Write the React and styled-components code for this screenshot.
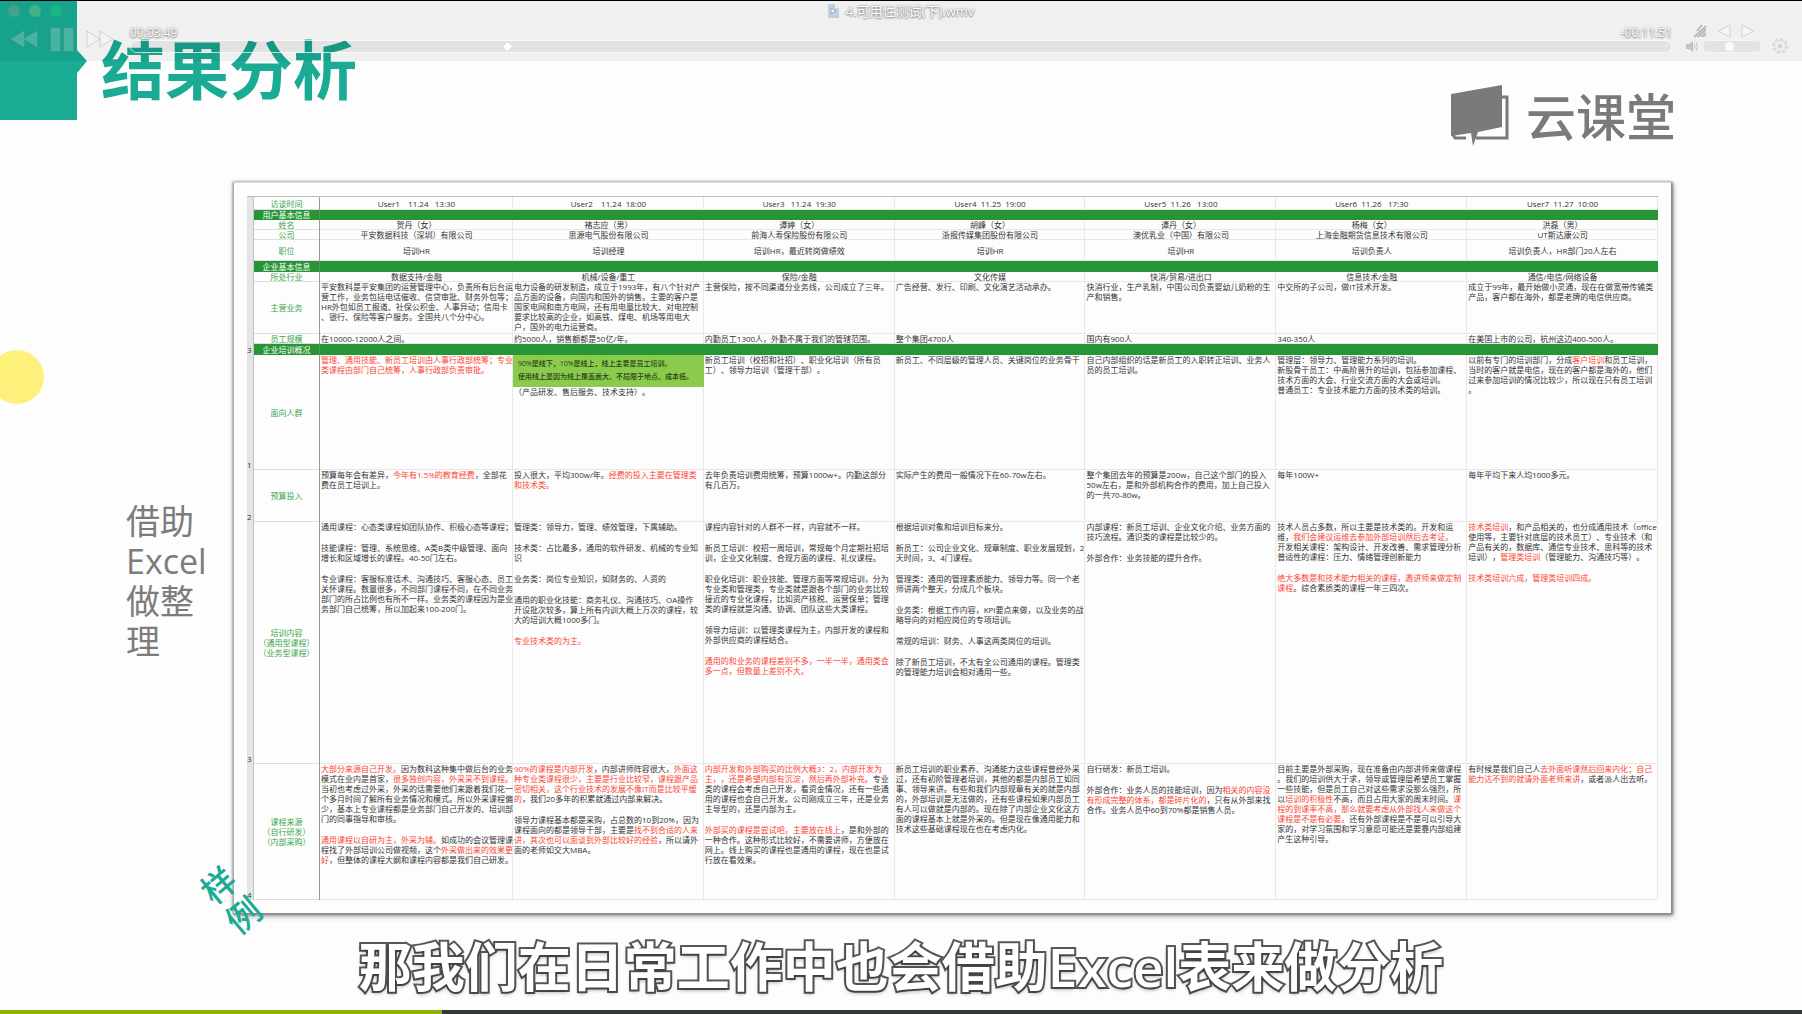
import React from "react";
import styled, { createGlobalStyle } from "styled-components";

const GlobalStyle = createGlobalStyle`
  * { box-sizing: border-box; }
  body {
    margin: 0;
    background: #fdfdfd;
    font-family: "Open Sans", "Noto Sans CJK SC", sans-serif;
    text-spacing-trim: space-all;
  }
  button {
    border: 0;
    padding: 0;
    background: none;
    display: flex;
    cursor: pointer;
  }
`;

const teal = "#19ab93";
const green = "#279535";

const Stage = styled.main`
  position: relative;
  display: flex;
  flex-direction: column;
  min-height: 100vh;
  overflow: hidden;
  border-top: 1px solid #000;
`;

/* ---------- player controls ---------- */

const Controls = styled.div`
  position: absolute;
  inset: 0 0 auto 0;
  height: 60px;
  background: rgba(0, 0, 0, 0.05);
`;

const TitleBar = styled.div`
  display: grid;
  grid-template-columns: 1fr auto 1fr;
  align-items: center;
  height: 20px;
  padding: 0 8px;
`;

const Lights = styled.div`
  display: flex;
  gap: 9px;
`;

const Light = styled.button`
  width: 12px;
  height: 12px;
  border-radius: 50%;
  background: ${(p) => p.$color};
`;

const FileName = styled.h2`
  display: flex;
  align-items: center;
  gap: 7px;
  margin: 0;
  font-size: 13px;
  line-height: 20px;
  font-weight: 400;
  color: #fff;
  text-shadow: 0 0 2px #777, 0 1px 2px #888;
`;

const ControlRow = styled.div`
  display: flex;
  align-items: center;
  height: 36px;
  padding: 0 12px 0 10px;
`;

const Transport = styled.div`
  display: flex;
  align-items: center;
  gap: 12px;
  width: 120px;
`;

const Timeline = styled.div`
  flex: 1;
  display: grid;
  grid-template-columns: 1fr 1fr;
  row-gap: 1px;
`;

const Clock = styled.time`
  font-size: 12px;
  line-height: 13px;
  color: #fff;
  text-shadow: 0 0 2px #777, 0 1px 2px #888;
  text-align: ${(p) => p.$align};
`;

const Seek = styled.input`
  grid-column: 1 / -1;
  appearance: none;
  width: 100%;
  height: 13px;
  margin: 0;
  border: 1px solid rgba(255, 255, 255, 0.7);
  border-radius: 7px;
  background: rgba(0, 0, 0, 0.05);
  &::-webkit-slider-thumb {
    appearance: none;
    width: 7px;
    height: 7px;
    background: #fff;
    transform: rotate(45deg);
    box-shadow: 0 0 1px #aaa;
  }
`;

const SideTools = styled.div`
  display: grid;
  grid-template-columns: 78px auto;
  column-gap: 10px;
  row-gap: 1px;
  margin-left: 12px;
  margin-right: 2px;
`;

const ToolRow = styled.div`
  grid-column: 1 / -1;
  display: flex;
  align-items: center;
  gap: 10px;
  height: 13px;
  padding-left: 8px;
`;

const VolumeRow = styled.label`
  grid-column: 1;
  display: flex;
  align-items: center;
  gap: 3px;
`;

const Volume = styled.input`
  appearance: none;
  width: 60px;
  height: 13px;
  margin: 0;
  border-radius: 7px;
  border: 1px solid #f6f6f6;
  background: #e3e3e3;
  &::-webkit-slider-thumb {
    appearance: none;
    width: 9px;
    height: 9px;
    border-radius: 50%;
    background: #fbfbfb;
  }
`;

/* ---------- slide ---------- */

const SlideHead = styled.header`
  display: flex;
  height: 181px;
  padding-right: 126px;
`;

const Marker = styled.div`
  width: 88px;
  height: 119px;
  background: ${teal};
  clip-path: polygon(0 0, 77px 0, 77px 49px, 87px 60px, 77px 72px, 77px 100%, 0 100%);
`;

const Heading = styled.h1`
  flex: 1;
  margin: 27px 0 0 13px;
  font-family: "Noto Sans CJK SC", sans-serif;
  font-size: 64px;
  line-height: 76px;
  font-weight: 700;
  color: ${teal};
`;

const Brand = styled.div`
  display: flex;
  align-items: flex-start;
  gap: 17px;
  padding-top: 84px;
  font-family: "Noto Sans CJK SC", sans-serif;
  font-size: 50px;
  line-height: 58px;
  font-weight: 500;
  color: #7a7a7a;
`;

const SlideBody = styled.section`
  display: flex;
  padding-right: 131px;
`;

const Side = styled.aside`
  position: relative;
  flex: 0 0 233px;
  padding: 319px 0 0 126px;
`;

const SideText = styled.p`
  width: 80px;
  margin: 0;
  font-size: 34px;
  line-height: 40px;
  font-weight: 400;
  color: #7c7c7c;
`;

const Pointer = styled.i`
  position: absolute;
  left: -10px;
  top: 168px;
  width: 54px;
  height: 54px;
  border-radius: 50%;
  background: #fdf17c;
`;

const Stamp = styled.span`
  position: absolute;
  z-index: 1;
  left: 213px;
  top: 678px;
  width: 34px;
  font-family: "Noto Sans CJK SC", sans-serif;
  font-size: 34px;
  line-height: 39px;
  font-weight: 500;
  color: ${teal};
  transform: rotate(-40deg);
`;

const Sheet = styled.div`
  flex: 1;
  min-width: 0;
  padding: 13px;
  border-left: 1px solid #aaa;
  border-top: 1px solid #ddd;
  background: #fdfdfd;
  box-shadow: 1px 1px 2px 1px #888, 2px 3px 6px rgba(0, 0, 0, 0.35), 0 0 4px rgba(0, 0, 0, 0.2);
`;

const Table = styled.table`
  width: 100%;
  table-layout: fixed;
  border-spacing: 0;
  border-top: 1px solid #bbb;
  font-size: 8px;
  line-height: 10px;
  color: #333;
`;

const Row = styled.tr`
  height: ${(p) => p.$h}px;
`;

const Gutter = styled.td`
  padding: 0;
  background: #e4e4e4;
  box-shadow: inset -1px 0 #c4c4c4;
  vertical-align: bottom;
  color: #333;
`;

const Label = styled.th`
  padding: 0;
  font-weight: 400;
  white-space: pre;
  text-align: center;
  vertical-align: middle;
  color: ${(p) => (p.$band ? "#fff" : "#3aa64a")};
  background: ${(p) => (p.$band ? green : "none")};
  box-shadow: inset 0 -1px ${(p) => (p.$band ? green : "#dedede")};
  border-right: 1px solid ${(p) => (p.$band ? "#55975c" : "#999")};
`;

const BandFill = styled.td`
  padding: 0;
  background: ${green};
`;

const Cell = styled.td`
  padding: 0 0 0 ${(p) => (p.$center ? 0 : 1)}px;
  white-space: pre;
  text-align: ${(p) => (p.$center ? "center" : "left")};
  vertical-align: ${(p) => (p.$center ? "middle" : "top")};
  box-shadow: inset -1px -1px #e8e8e8;
`;

const Para = styled.p`
  margin: 0;
  & + & {
    margin-top: 11px;
  }
`;

const Red = styled.span`
  color: #fb4634;
`;

const Note = styled.div`
  height: 32px;
  margin-left: -1px;
  padding: 2px 5px;
  background: #8acb4b;
  color: #24401a;
  font-size: 7px;
  line-height: 13px;
  font-weight: 500;
`;

const Caption = styled.p`
  margin: 16px 0 0;
  font-size: 53px;
  line-height: 76px;
  font-weight: 600;
  text-align: center;
  color: #fff;
  -webkit-text-stroke: 4px #5a5a5a;
  paint-order: stroke fill;
  text-shadow: 0 2px 4px rgba(0, 0, 0, 0.4);
`;

const Progress = styled.div`
  position: relative;
  margin-top: auto;
  height: 4px;
  background: #343836;
`;

const Played = styled.div`
  height: 100%;
  background: #8fb008;
`;

/* Text between square brackets is set in red; an empty line starts a new paragraph. */
const ROWS = [
  { h: 13, label: "访谈时间", center: true, cells: ["User1    11.24   13:30", "User2    11.24  18:00", "User3   11.24  19:30", "User4  11.25  19:00", "User5  11.26   13:00", "User6  11.26   17:30", "User7  11.27  10:00"] },
  { h: 10, label: "用户基本信息", band: true },
  { h: 10, label: "姓名", center: true, cells: ["贺丹（女）", "褚志应（男）", "谭婷（女）", "胡峰（女）", "谭丹（女）", "杨梅（女）", "洪磊（男）"] },
  { h: 10, label: "公司", center: true, cells: ["平安数据科技（深圳）有限公司", "思源电气股份有限公司", "前海人寿保险股份有限公司", "浙报传媒集团股份有限公司", "澳优乳业（中国）有限公司", "上海金融期货信息技术有限公司", "UT斯达康公司"] },
  { h: 21, label: "职位", center: true, cells: ["培训HR", "培训经理", "培训HR，最近转岗做绩效", "培训HR", "培训HR", "培训负责人", "培训负责人，HR部门20人左右"] },
  { h: 11, label: "企业基本信息", band: true },
  { h: 10, label: "所处行业", center: true, cells: ["数据支持/金融", "机械/设备/重工", "保险/金融", "文化传媒", "快消/贸易/进出口", "信息技术/金融", "通信/电信/网络设备"] },
  { h: 52, label: "主营业务", cells: [
    "平安数科是平安集团的运营管理中心，负责所有后台运\n营工作，业务包括电话催收、信贷审批、财务外包等；\nHR外包如员工报道、社保公积金、人事异动；信用卡\n、银行、保险等客户服务。全国共八个分中心。",
    "电力设备的研发制造，成立于1993年，有八个针对产\n品方面的设备，向国内和国外的销售。主要的客户是\n国家电网和南方电网，还有用电量比较大、对电控制\n要求比较高的企业，如高铁、煤电、机场等用电大\n户，国外的电力运营商。",
    "主营保险，按不同渠道分业务线，公司成立了三年。",
    "广告经营、发行、印刷、文化演艺活动承办。",
    "快消行业，生产乳制，中国公司负责婴幼儿奶粉的生\n产和销售。",
    "中交所的子公司，做IT技术开发。",
    "成立于99年，最开始做小灵通，现在在做宽带传输类\n产品，客户都在海外，都是老牌的电信供应商。"] },
  { h: 10, label: "员工规模", cells: ["在10000-12000人之间。", "约5000人，销售额都是50亿/年。", "内勤员工1300人，外勤不属于我们的管辖范围。", "整个集团4700人", "国内有900人", "340-350人", "在美国上市的公司，杭州这边400-500人。"] },
  { h: 11, label: "企业培训概况", band: true, mark: "3" },
  { h: 115, label: "面向人群", mark: "1", cells: [
    "[管理、通用技能、新员工培训由人事行政部统筹；专业]\n[类课程由部门自己统筹，人事行政部负责审批。]",
    { note: "90%是线下，10%是线上，线上主要是员工培训。\n使用线上是因为线上覆盖面大、不局限于地点、成本低。", text: "（产品研发、售后服务、技术支持）。" },
    "新员工培训（校招和社招）、职业化培训（所有员\n工）、领导力培训（管理干部）。",
    "新员工、不同层级的管理人员、关键岗位的业务骨干",
    "自己内部组织的话是新员工的入职转正培训、业务人\n员的员工培训。",
    "管理层：领导力、管理能力系列的培训。\n新股骨干员工：中高阶晋升的培训，包括参加课程、\n技术方面的大会、行业交流方面的大会或培训。\n普通员工：专业技术能力方面的技术类的培训。",
    "以前有专门的培训部门，分成[客户培训]和员工培训，\n当时的客户就是电信，现在的客户都是海外的，他们\n过来参加培训的情况比较少，所以现在只有员工培训\n。"] },
  { h: 52, label: "预算投入", mark: "2", cells: [
    "预算每年会有差异，[今年有1.5%的教育经费]，全部花\n费在员工培训上。",
    "投入很大，平均300w/年。[经费的投入主要在管理类]\n[和技术类。]",
    "去年负责培训费用统筹，预算1000w+。内勤这部分\n有几百万。",
    "实际产生的费用一般情况下在60-70w左右。",
    "整个集团去年的预算是200w，自己这个部门的投入\n50w左右，是和外部机构合作的费用，加上自己投入\n的一共70-80w。",
    "每年100W+",
    "每年平均下来人均1000多元。"] },
  { h: 242, label: "培训内容\n（通用型课程）\n（业务型课程）", mark: "3", cells: [
    "通用课程：心态类课程如团队协作、积极心态等课程；\n\n技能课程：管理、系统思维、A类B类中级管理、面向\n增长和区域增长的课程。40-50门左右。\n\n专业课程：客服标准话术、沟通技巧、客服心态、员工\n关怀课程。数量很多，不同部门课程不同，在不同业务\n部门的所占比例也有所不一样。业务类的课程因为是业\n务部门自己统筹，所以加起来100-200门。",
    "管理类：领导力，管理、绩效管理，下属辅助。\n\n技术类：占比最多，通用的软件研发、机械的专业知\n识\n\n业务类：岗位专业知识，如财务的、人资的\n\n通用的职业化技能：商务礼仪、沟通技巧、OA操作\n开设批次较多，算上所有内训大概上万次的课程，较\n大的培训大概1000多门。\n\n[专业技术类的为主。]",
    "课程内容针对的人群不一样，内容就不一样。\n\n新员工培训：校招一周培训，常规每个月定期社招培\n训，企业文化制度、合规方面的课程、礼仪课程。\n\n职业化培训：职业技能、管理方面等常规培训，分为\n专业类和管理类，专业类就是跟各个部门的业务比较\n接近的专业化课程，比如资产核税、运营保单；管理\n类的课程就是沟通、协调、团队这些大类课程。\n\n领导力培训：以管理类课程为主，内部开发的课程和\n外部供应商的课程结合。\n\n[通用的和业务的课程差别不多，一半一半，通用类会]\n[多一点，但数量上差别不大。]",
    "根据培训对象和培训目标来分。\n\n新员工：公司企业文化、规章制度、职业发展规划，2\n天时间，3、4门课程。\n\n管理类：通用的管理素质能力、领导力等。同一个老\n师讲两个整天，分成几个板块。\n\n业务类：根据工作内容，KPI要点来做，以及业务的战\n略导向的对相应岗位的专项培训。\n\n常规的培训：财务、人事这两类岗位的培训。\n\n除了新员工培训，不太有全公司通用的课程。管理类\n的管理能力培训会相对通用一些。",
    "内部课程：新员工培训、企业文化介绍、业务方面的\n技巧流程。通识类的课程是比较少的。\n\n外部合作：业务技能的提升合作。",
    "技术人员占多数，所以主要是技术类的。开发和运\n维，[我们会建议运维去参加外部培训然后去考证。]\n开发相关课程：架构设计、开发改善、需求管理分析\n普适性的课程：压力、情绪管理创新能力\n\n[绝大多数是和技术能力相关的课程，邀讲师来做定制]\n[课程]。综合素质类的课程一年三四次。",
    "[技术类培训]，和产品相关的，也分成通用技术（office\n使用等，主要针对底层的技术员工）、专业技术（和\n产品有关的，数据库、通信专业技术、思科等的技术\n培训），[管理类培训]（管理能力、沟通技巧等）。\n\n[技术类培训六成，管理类培训四成。]"] },
  { h: 136, label: "课程来源\n（自行研发）\n（内部采购）", mark: "4", cells: [
    "[大部分来源自己开发。]因为数科这种集中做后台的业务\n模式在业内是首家，[很多独创内容，外采采不到课程。]\n当初也考虑过外采，外采的话需要他们来跟着我们花一\n个多月时间了解所有业务情况和模式。所以外采课程偏\n少，基本上专业课程都是业务部门自己开发的、培训部\n门的同事指导和审核。\n\n[通用课程以自研为主，外采为辅。]如成功的会议管理课\n程找了外部培训公司做视频，这个[外采做出来的效果更]\n[好]，但整体的课程大纲和课程内容都是我们自己研发。",
    "[90%的课程是内部开发]，内部讲师阵容很大，[外面这]\n[种专业类课程很少，主要是行业比较窄，课程跟产品]\n[密切相关，这个行业技术的发展不像IT而是比较平缓]\n[的]，我们20多年的积累就通过内部来解决。\n\n领导力课程基本都是采购，占总数的10到20%，因为\n课程面向的都是领导干部，主要是[找不到合适的人来]\n[讲，其次也可以面谈到外部比较好的经验]，所以请外\n面的老师如交大MBA。",
    "[内部开发和外部购买的比例大概3：2，内部开发为]\n[主，，还是希望内部有沉淀，然后再外部补充。]专业\n类的课程会考虑自己开发，看资金情况，还有一些通\n用的课程也会自己开发。公司刚成立三年，还是业务\n主导型的，还是内部为主。\n\n[外部买的课程是尝试吧，主要放在线上]，是和外部的\n一种合作。这种形式比较好，不需要讲师，方便放在\n网上。线上购买的课程也是通用的课程，现在也是试\n行放在看效果。",
    "新员工培训的职业素养、沟通能力这些课程曾经外采\n过，还有初阶管理者培训，其他的都是内部员工如同\n事、领导来讲。有些和我们内部规章有关的就是内部\n的，外部培训是无法做的，还有些课程如果内部员工\n有人可以做就是内部的。现在除了内部企业文化这方\n面的课程基本上就是外采的。但是现在像通用能力和\n技术这些基础课程现在也在考虑内化。",
    "自行研发：新员工培训。\n\n外部合作：业务人员的技能培训，因为[相关的内容没]\n[有形成完整的体系，都是碎片化的]，只有从外部来找\n合作。业务人员中60到70%都是销售人员。",
    "目前主要是外部采购，现在准备由内部讲师来做课程\n。我们的培训供大于求，领导或管理层希望员工掌握\n一些技能，但是员工自己对这些需求没那么强烈，所\n以[培训的积极性]不高，而且占用大家的周末时间。[课]\n[程的到课率不高，那么就要考虑从外部找人来做这个]\n[课程是不是有必要。]还有外部课程是不是可以引导大\n家的，对学习氛围和学习意愿可能还是要靠内部组建\n产生这种引导。",
    "有时候是我们自己人[去外面听课然后回来内化；自己]\n[能力达不到的就请外面老师来讲]，或者派人出去听。"] },
];

const colored = (text) =>
  text.split(/(\[[^\]]*\])/).map((part, i) =>
    part.startsWith("[") ? <Red key={i}>{part.slice(1, -1)}</Red> : part
  );

const Paragraphs = ({ text }) =>
  text.split("\n\n").map((p, i) => <Para key={i}>{colored(p)}</Para>);

function SheetRow({ row }) {
  return (
    <Row $h={row.h}>
      <Gutter>{row.mark}</Gutter>
      <Label scope="row" $band={row.band}>{row.label}</Label>
      {row.band ? (
        <BandFill colSpan={7} />
      ) : (
        row.cells.map((cell, i) => (
          <Cell key={i} $center={row.center}>
            {cell.note ? (
              <>
                <Note>{cell.note}</Note>
                <Paragraphs text={cell.text} />
              </>
            ) : row.center ? cell : (
              <Paragraphs text={cell} />
            )}
          </Cell>
        ))
      )}
    </Row>
  );
}

const glyph = { fill: "rgba(255,255,255,0.2)", stroke: "rgba(150,150,150,0.35)", strokeWidth: 1 };
const outline = { fill: "#f4f4f4", stroke: "#d2d2d2", strokeWidth: 1 };

function PlayerControls() {
  return (
    <Controls>
      <TitleBar>
        <Lights>
          <Light $color="#46a08c" aria-label="Close" />
          <Light $color="#45b286" aria-label="Minimize" />
          <Light $color="#14b686" aria-label="Zoom" />
        </Lights>
        <FileName>
          <svg width="11" height="14" viewBox="0 0 11 14">
            <path d="M0 0h7l4 4v10H0z" fill="#c5cede" />
            <path d="M7 0v4h4z" fill="#e9eef5" />
            <path d="M3 4l5 3-5 3z" fill="#f2f8ff" stroke="#91aaca" strokeWidth="1" />
          </svg>
          4.可用性测试(下).wmv
        </FileName>
      </TitleBar>
      <ControlRow>
        <Transport>
          <button aria-label="Rewind">
            <svg width="28" height="18" {...glyph}><path d="M14 1v16L1 9zM27 1v16L14 9z" /></svg>
          </button>
          <button aria-label="Pause">
            <svg width="24" height="25" {...glyph}><path d="M1 1h9v23H1zM14 1h9v23h-9z" /></svg>
          </button>
          <button aria-label="Fast forward">
            <svg width="28" height="18" {...glyph}><path d="M1 1v16l13-8zM14 1v16l13-8z" /></svg>
          </button>
        </Transport>
        <Timeline>
          <Clock $align="left">00:03:49</Clock>
          <Clock $align="right">-00:11:51</Clock>
          <Seek type="range" aria-label="Position" min="0" max="940" defaultValue="229" />
        </Timeline>
        <SideTools>
          <ToolRow>
            <button aria-label="Signal">
              <svg width="15" height="14" viewBox="0 0 15 14">
                <path d="M1 13L14 1v12z" fill="#d8d8d8" />
                <path d="M2 13L14 2M6 13l8-8M10 13l4-4M5 7l5-6" stroke="#b2b2b2" strokeWidth="1.5" />
              </svg>
            </button>
            <button aria-label="Previous">
              <svg width="14" height="14" {...outline}><path d="M13 1v12L1 7z" /></svg>
            </button>
            <button aria-label="Next">
              <svg width="14" height="14" {...outline}><path d="M1 1v12l12-6z" /></svg>
            </button>
          </ToolRow>
          <VolumeRow>
            <svg width="15" height="13" viewBox="0 0 15 13" fill="none" stroke="#c2c2c2">
              <path d="M2 4h3l4-3v11L5 9H2z" fill="#c2c2c2" stroke="none" />
              <path d="M10 4q2 2.500 0 5M12 2q3 4.500 0 9" />
            </svg>
            <Volume type="range" aria-label="Volume" defaultValue="45" />
          </VolumeRow>
          <button aria-label="Settings">
            <svg width="16" height="16" viewBox="0 0 16 16" fill="none" stroke="#d6d6d6">
              <circle cx="8" cy="8" r="7" strokeDasharray="3 2.500" strokeWidth="2" />
              <circle cx="8" cy="8" r="5.500" />
              <circle cx="8" cy="8" r="2" fill="#d6d6d6" />
            </svg>
          </button>
        </SideTools>
      </ControlRow>
    </Controls>
  );
}

export default function App() {
  return (
    <Stage lang="zh-CN">
      <GlobalStyle />
      <SlideHead>
        <Marker />
        <Heading>结果分析</Heading>
        <Brand>
          <svg width="58" height="62" viewBox="0 0 58 62">
            <path d="M48 12h8v41H25M15 53H4l-3-5" fill="none" stroke="#7a7a7a" strokeWidth="3" />
            <path d="M0 9L51 0v42L27 47l-5 14-2-13L0 51z" fill="#7a7a7a" />
          </svg>
          云课堂
        </Brand>
      </SlideHead>
      <SlideBody>
        <Side>
          <SideText>借助 Excel 做整理</SideText>
          <Pointer />
          <Stamp>样例</Stamp>
        </Side>
        <Sheet>
          <Table>
            <colgroup>
              <col width="7" />
              <col width="66" />
              <col width="193" />
              <col span="6" />
            </colgroup>
            <tbody>
              {ROWS.map((row) => <SheetRow key={row.label} row={row} />)}
            </tbody>
          </Table>
        </Sheet>
      </SlideBody>
      <Caption>那我们在日常工作中也会借助Excel表来做分析</Caption>
      <Progress role="progressbar" aria-label="Playback" aria-valuenow={25}>
        <Played style={{ width: `${(442 / 1802) * 100}%` }} />
      </Progress>
      <PlayerControls />
    </Stage>
  );
}
